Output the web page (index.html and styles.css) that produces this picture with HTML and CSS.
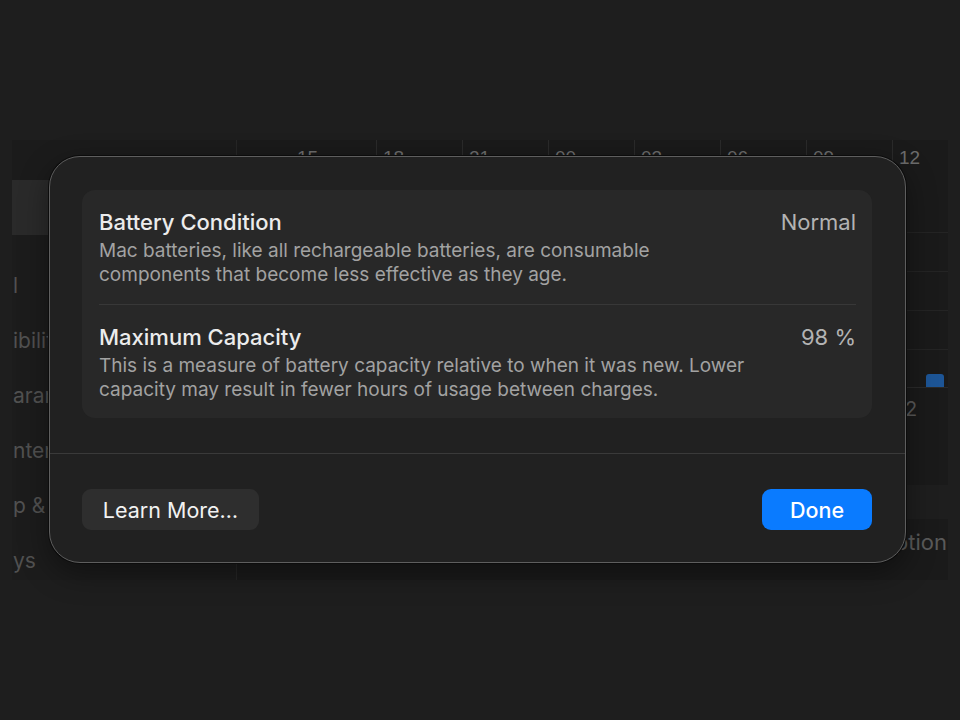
FILE: index.html
```html
<!DOCTYPE html>
<html lang="en">
<head>
<meta charset="utf-8">
<title>Battery Health</title>
<link rel="stylesheet" href="styles.css">
</head>
<body>
<div class="stage">
  <div class="window">
    <aside class="sidebar">
      <div class="side-top"></div>
      <div class="side-item selected"></div>
      <div class="side-list">
        <div class="side-item">l</div>
        <div class="side-item">ibility</div>
        <div class="side-item">arance</div>
        <div class="side-item">nter</div>
        <div class="side-item">p &amp; Dock</div>
        <div class="side-item">ys</div>
      </div>
    </aside>
    <main class="content">
      <div class="hours">
        <span class="hour first">15</span>
        <span class="hour">18</span>
        <span class="hour">21</span>
        <span class="hour">00</span>
        <span class="hour">03</span>
        <span class="hour">06</span>
        <span class="hour">09</span>
        <span class="hour">12</span>
      </div>
      <div class="plot">
        <div class="gridline"></div>
        <div class="gridline"></div>
        <div class="gridline"></div>
        <div class="gridline last"><span class="bar"></span></div>
      </div>
      <div class="axis-label">2</div>
      <div class="plot2"><div class="plot2-band"></div></div>
      <div class="options-row"><span class="options">Option</span></div>
    </main>
  </div>

  <div class="modal" role="dialog">
    <div class="modal-body">
      <section class="card">
        <div class="row">
          <div class="row-text">
            <h2 class="row-title">Battery Condition</h2>
            <p class="row-desc">Mac batteries, like all rechargeable batteries, are consumable<br>components that become less effective as they age.</p>
          </div>
          <div class="row-value">Normal</div>
        </div>
        <div class="row">
          <div class="row-text">
            <h2 class="row-title">Maximum Capacity</h2>
            <p class="row-desc">This is a measure of battery capacity relative to when it was new. Lower<br>capacity may result in fewer hours of usage between charges.</p>
          </div>
          <div class="row-value">98 %</div>
        </div>
      </section>
    </div>
    <div class="modal-footer">
      <button class="btn btn-secondary" type="button">Learn More…</button>
      <button class="btn btn-primary" type="button">Done</button>
    </div>
  </div>
</div>
</body>
</html>
```

FILE: styles.css
```css
* { box-sizing: border-box; }

html, body {
  margin: 0;
  padding: 0;
}

body {
  width: 960px;
  height: 720px;
  background: #1e1e1e;
  font-family: "Inter", "Liberation Sans", sans-serif;
  overflow: hidden;
}

.stage {
  position: relative;
  width: 960px;
  height: 720px;
  padding: 140px 12px 0 12px;
}

/* ---------- dimmed window behind ---------- */
.window {
  height: 440px;
  background: #1a1a1a;
  display: grid;
  grid-template-columns: 225px 1fr;
  overflow: hidden;
}

.sidebar {
  background: #1c1c1c;
  border-right: 1px solid #262626;
  overflow: hidden;
}

.side-top { height: 40px; background: #1b1b1b; }

.side-item {
  height: 55px;
  line-height: 55px;
  font-size: 21px;
  color: #515151;
  white-space: nowrap;
  padding-left: 1px;
}
.side-item.selected { background: #2a2a2a; }

.side-list { margin-top: 23px; }

.content {
  display: flex;
  flex-direction: column;
  overflow: hidden;
}

.hours {
  display: flex;
  padding-left: 53px;
  height: 28px;
}

.hour {
  width: 86px;
  flex: none;
  border-left: 1px solid #2a2a2a;
  padding-left: 6px;
  font-size: 19px;
  line-height: 18px;
  padding-top: 9px;
  color: #6c6c6c;
  font-family: "Liberation Sans", sans-serif;
}
.hour.first { border-left-color: transparent; }

.plot {
  margin-top: 64px;
  margin-left: 53px;
}

.gridline {
  height: 39px;
  border-top: 1px solid #242424;
  display: flex;
  justify-content: flex-end;
  align-items: flex-end;
  padding-right: 4px;
}
.gridline.last { border-bottom: 1px solid #2a2a2a; }

.bar {
  width: 18px;
  height: 13px;
  background: #1d5596;
  border-radius: 3px 3px 0 0;
}

.axis-label {
  padding-left: 668px;
  font-size: 20px;
  line-height: 20px;
  margin-top: 11px;
  color: #585858;
}

.plot2 {
  height: 100px;
  margin-left: 53px;
  display: flex;
  align-items: flex-end;
}
.plot2-band { height: 34px; width: 100%; background: #1e1e1e; }

.options-row {
  display: flex;
  justify-content: flex-end;
  padding-right: 1px;
  margin-top: 10px;
}
.options {
  font-size: 22px;
  color: #5a5a5a;
  white-space: nowrap;
}

/* ---------- modal ---------- */
.modal {
  position: absolute;
  left: 49px;
  top: 156px;
  width: 857px;
  height: 407px;
  background: #212121;
  border: 1px solid #5e5e5e;
  border-radius: 31px;
  box-shadow: 0 0 0 1px #0c0c0c, 0 10px 30px rgba(0,0,0,0.4);
  display: flex;
  flex-direction: column;
  color: #e6e6e6;
}

.modal-body {
  padding: 33px 33px 0 32px;
  height: 297px;
  border-bottom: 1px solid #3a3a3a;
}

.card {
  background: #282828;
  border-radius: 13px;
  padding: 0 16px 0 17px;
  height: 228px;
}

.row {
  display: flex;
  justify-content: space-between;
  align-items: flex-start;
  padding: 19px 0 17px 0;
}
.row + .row {
  border-top: 1px solid #383838;
  padding: 19px 0 17px 0;
}

.row-title {
  margin: 0;
  font-size: 22px;
  line-height: 26px;
  font-weight: 500;
  color: #ececec;
}

.row-desc {
  margin: 4px 0 0 0;
  font-size: 19px;
  line-height: 24px;
  color: #a2a2a2;
}

.row-value {
  font-size: 22px;
  line-height: 26px;
  color: #b3b3b3;
}

.modal-footer {
  display: flex;
  justify-content: space-between;
  align-items: flex-start;
  padding: 35px 33px 0 32px;
}

.btn {
  font-family: inherit;
  font-size: 21.5px;
  line-height: 24px;
  height: 41px;
  border: none;
  border-radius: 9px;
  color: #f2f2f2;
  padding: 0;
}

.btn-secondary {
  width: 177px;
  background: #2e2e2e;
}

.btn-primary {
  width: 110px;
  background: #0a7bff;
  color: #fff;
  font-weight: 500;
}
```
